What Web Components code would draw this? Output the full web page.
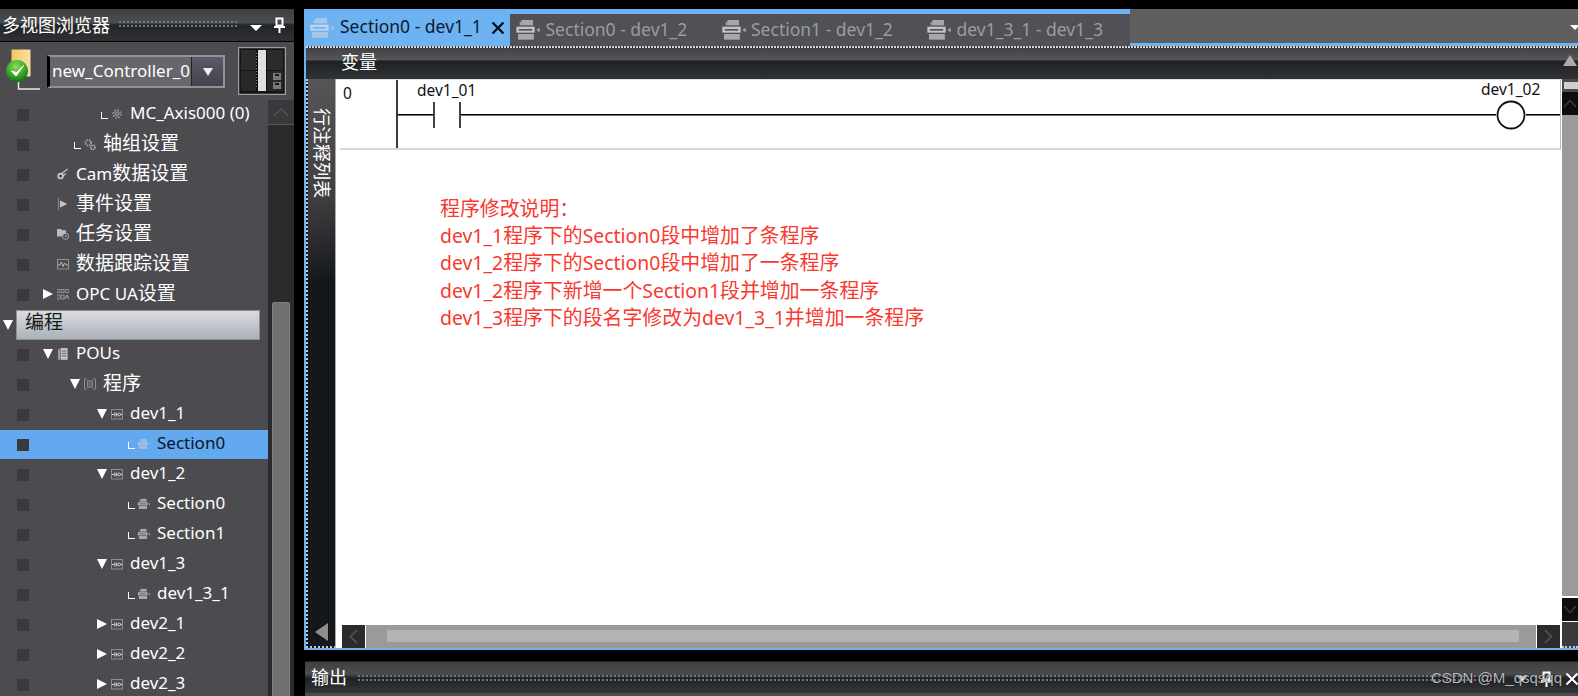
<!DOCTYPE html>
<html lang="zh">
<head>
<meta charset="utf-8">
<title>多视图浏览器</title>
<style>
html,body{margin:0;height:696px;overflow:hidden;background:#000;font-family:"Noto Sans","Noto Sans CJK SC",sans-serif;}
</style>
</head>
<body>
<app-shell>
  <view-browser slot="left"></view-browser>
  <ladder-editor slot="main"></ladder-editor>
  <output-bar slot="bottom"></output-bar>
</app-shell>
<script>
const mix = s => s.replace(/[\u4e00-\u9fff\uff1a]+/g, m => `<span class="c">${m}</span>`);
const CJK = `.c{font-size:1.118em;font-family:"Noto Sans CJK SC","Noto Sans",sans-serif;}`;
const section = (a,b,c)=>`<svg viewBox="0 0 14 12" width="100%" height="100%"><rect x="3" y="0" width="7" height="3.2" fill="${a}"/><rect x="2" y="1.2" width="1" height="2" fill="${a}"/><rect x="0" y="4" width="11" height="3.6" fill="${b}"/><rect x="1.5" y="5.4" width="8" height="1" fill="${c}"/><rect x="1" y="8.4" width="9.5" height="3.4" fill="${a}"/><path d="M14 4.6 12 6l2 1.4z" fill="${a}"/></svg>`;
const ICONS = {
  section: section('#a9a9ac','#bdbdc0','#4c4b50'),
  sectionSel: section('#a6bdd6','#b9cde2','#63a9ef'),
  tabActive: section('#a9c6e4','#bcd4ec','#6db3f1'),
  tab: section('#a8a8aa','#c4c4c6','#505156'),
  prog:`<svg viewBox="0 0 12 11" width="12" height="11"><rect x=".5" y=".5" width="11" height="9.5" fill="none" stroke="#8e8e90"/><path d="M1 5.5h2.6M3.800 3.500v4M5.400 3.500v4M5.400 5.500h1.400M9.600 5.500H11" stroke="#d0d0d0" fill="none"/><circle cx="8.200" cy="5.500" r="1.400" fill="none" stroke="#d0d0d0"/></svg>`,
  gear:`<svg viewBox="0 0 12 12" width="12" height="12"><circle cx="6" cy="6" r="3.600" fill="none" stroke="#8f8f90" stroke-width="2.400" stroke-dasharray="1.600 1.200"/><circle cx="6" cy="6" r="1.600" fill="#5c5c60" stroke="#a8a8a8" stroke-width=".8"/></svg>`,
  gears:`<svg viewBox="0 0 13 13" width="13" height="13"><circle cx="4.600" cy="4.600" r="3" fill="none" stroke="#a0a0a0" stroke-width="2.200" stroke-dasharray="1.400 1"/><circle cx="9.600" cy="9.600" r="2.300" fill="none" stroke="#c0c0c0" stroke-width="1.800" stroke-dasharray="1.200 .9"/></svg>`,
  cam:`<svg viewBox="0 0 12 12" width="12" height="12"><circle cx="3.600" cy="8" r="2.400" fill="none" stroke="#c8c8c8" stroke-width="1.700"/><path d="M4.600 5.600 10.800 1M5.800 8 9 5.600" stroke="#c8c8c8" stroke-width="1.200" fill="none"/></svg>`,
  flag:`<svg viewBox="0 0 12 12" width="12" height="12"><path d="M1.500 0v12" stroke="#8f8f90" fill="none"/><path d="M3 2.400 10.400 6 3 9.600z" fill="#c4c4c4"/></svg>`,
  task:`<svg viewBox="0 0 12 12" width="12" height="12"><path d="M0 1h4l1 1.200h4v6.400H0z" fill="#bcbcbc"/><circle cx="8.600" cy="8.400" r="3" fill="#4c4b50" stroke="#a8a8a8"/><path d="M8.600 6.800v1.700h1.400" stroke="#c0c0c0" fill="none" stroke-width=".7"/></svg>`,
  trace:`<svg viewBox="0 0 12 11" width="12" height="11"><rect x=".5" y=".5" width="11" height="9.500" fill="none" stroke="#909092"/><path d="M1 6 3 6 4.400 3 6 7.600 7.600 4 9 6h2" stroke="#cfcfcf" fill="none" stroke-width=".8"/></svg>`,
  opc:`<svg viewBox="0 0 12 11" width="12" height="11"><path d="M0 .5h3v3H0zM4 .5h3v3H4zM8 .5h3.500v3H8zM0 6h3v4H0zM4 6h3v4H4z" fill="none" stroke="#a0a0a2" stroke-width=".8"/><path d="M8 10l2-4 2 4" stroke="#b4b4b6" fill="none"/></svg>`,
  pou:`<svg viewBox="0 0 10 12" width="10" height="12"><rect x="0" y="1.200" width="2" height="10.400" fill="#9d9d9f"/><rect x="2.600" y="0" width="7" height="11.800" fill="#c2c2c4"/><path d="M3.800 3h4.600M3.800 5.400h4.600M3.800 7.800h4.600" stroke="#6c6c70"/></svg>`,
  prg:`<svg viewBox="0 0 13 12" width="13" height="12"><path d="M3 .5H.5v11H3M10 .5h2.500v11H10" stroke="#98989a" fill="none"/><rect x="3.400" y="2" width="6.200" height="8" fill="#8e8e90"/><path d="M4.400 4h4.200M4.400 6h4.200M4.400 8h4.200" stroke="#3e3e42"/></svg>`
};

class Comp extends HTMLElement {
  constructor(){ super(); this.attachShadow({mode:'open'}); }
  connectedCallback(){ this.shadowRoot.innerHTML = this.render(); }
}

class AppShell extends Comp {
  render(){ return `<style>
    :host{display:grid;grid-template-columns:294px 1fr;column-gap:10px;padding-top:9px;height:687px;overflow:hidden;box-sizing:content-box;}
    .l{grid-row:1;min-height:0;overflow:hidden;display:flex;}
    .r{display:flex;flex-direction:column;row-gap:11px;min-height:0;}
  </style><div class="l"><slot name="left"></slot></div>
  <div class="r"><slot name="main"></slot><slot name="bottom"></slot></div>`; }
}

class GripDots extends Comp {
  render(){ return `<style>
    :host{display:block;flex:1;height:8px;background-image:radial-gradient(circle at 1px 1px,#77777a 0.9px,transparent 1.100px);background-size:4px 4px;}
  </style>`; }
}
class PinIcon extends Comp {
  render(){ return `<style>:host{display:inline-flex}</style><svg viewBox="0 0 11 16" width="11" height="16"><path d="M2.500 1.500h6v7h-6z" fill="none" stroke="#fff" stroke-width="2"/><path d="M0 9h11v2H0z" fill="#fff"/><path d="M4.500 11h2v5h-2z" fill="#fff"/></svg>`; }
}

class ViewBrowser extends Comp {
  render(){
    const rows = [
      [2,'leaf','gear','MC_Axis000 (0)'],
      [1,'leaf','gears','轴组设置'],
      [0,'','cam','Cam数据设置'],
      [0,'','flag','事件设置'],
      [0,'','task','任务设置'],
      [0,'','trace','数据跟踪设置'],
      [0,'closed','opc','OPC UA设置'],
      'group',
      [0,'open','pou','POUs'],
      [1,'open','prg','程序'],
      [2,'open','prog','dev1_1'],
      [3,'leaf','sectionSel','Section0','sel'],
      [2,'open','prog','dev1_2'],
      [3,'leaf','section','Section0'],
      [3,'leaf','section','Section1'],
      [2,'open','prog','dev1_3'],
      [3,'leaf','section','dev1_3_1'],
      [2,'closed','prog','dev2_1'],
      [2,'closed','prog','dev2_2'],
      [2,'closed','prog','dev2_3'],
    ].map(r => r==='group' ? `<tree-group label="编程"></tree-group>`
      : `<tree-row level="${r[0]}" marker="${r[1]}" icon="${r[2]}" label="${r[3]}" ${r[4]?'selected':''}></tree-row>`).join('');
    return `<style>
      :host{display:flex;flex-direction:column;width:294px;height:687px;background:#4c4b50;overflow:hidden;}
      .head{height:32px;flex:none;display:flex;align-items:center;background:linear-gradient(#3d3f41 0,#4c4d50 42%,#222527 50%,#2f3133 100%);border-bottom:1px solid #000;color:#fff;font-size:18px;line-height:30px;padding-left:2px;font-family:"Noto Sans CJK SC",sans-serif;}
      .head span:first-child{margin-bottom:2px;}
      .head grip-dots{margin:0 13px 0 9px;}
      .tri{width:0;height:0;border-left:6px solid transparent;border-right:6px solid transparent;border-top:6px solid #fff;margin:6px 12px 0 0;}
      pin-icon{margin-right:9px;}
      .top{height:58px;flex:none;display:flex;position:relative;}
      controller-badge{margin:7px 0 0 6px;}
      combo-box{margin:13px 13px 0 6px;}
      module-thumb{margin-top:5px;}
      .tree{flex:1;display:flex;min-height:0;}
      .rows{width:268px;flex:none;}
    </style>
    <div class="head"><span>多视图浏览器</span><grip-dots></grip-dots><span class="tri"></span><pin-icon></pin-icon></div>
    <div class="top"><controller-badge></controller-badge><combo-box label="new_Controller_0"></combo-box><module-thumb></module-thumb></div>
    <div class="tree"><div class="rows">${rows}</div><tree-scroll></tree-scroll></div>`;
  }
}

class ControllerBadge extends Comp {
  render(){ return `<style>:host{display:block;width:35px;height:43px;flex:none}</style>
  <svg viewBox="0 0 35 43" width="35" height="43">
    <defs><radialGradient id="g" cx=".45" cy=".3" r=".7"><stop offset="0" stop-color="#8fdc5a"/><stop offset=".6" stop-color="#3aa82a"/><stop offset="1" stop-color="#176e18"/></radialGradient>
    <linearGradient id="y" x1="0" x2="1"><stop offset="0" stop-color="#f3c75f"/><stop offset="1" stop-color="#f7e2a2"/></linearGradient></defs>
    <path d="M5.500 .5H24.500V27.500H5.500z" fill="url(#y)"/>
    <circle cx="11" cy="22" r="11" fill="url(#g)"/>
    <path d="M5.500 22l4.500 5 7.500-10.500-7 7z" fill="#fff" stroke="#fff" stroke-width="1"/>
    <path d="M12.500 33v7h21.500" fill="none" stroke="#e6e6e6" stroke-width="1.500"/>
  </svg>`; }
}
class ComboBox extends Comp {
  render(){ return `<style>
    :host{display:flex;width:178px;height:33px;flex:none;box-sizing:border-box;border:2px solid #929294;border-left:3px solid #000;background:#67676b;color:#fff;font-size:17px;line-height:27px;overflow:hidden;}
    .t{flex:1;padding-left:2px;white-space:nowrap;min-width:0;}
    .b{width:31px;flex:none;background:linear-gradient(#5a5a68,#43434f);border-left:1px solid #222;display:flex;align-items:center;justify-content:center;}
    .b i{width:0;height:0;border-left:5.500px solid transparent;border-right:5.500px solid transparent;border-top:8px solid #eee;}
  </style><span class="t">${this.getAttribute('label')}</span><span class="b"><i></i></span>`; }
}
class ModuleThumb extends Comp {
  render(){ return `<style>:host{display:block;width:48px;height:48px;flex:none}</style>
  <svg viewBox="0 0 48 48" width="48" height="48">
    <rect x=".5" y=".5" width="47" height="47" fill="#141414" stroke="#9c9c9c" stroke-width="1.500"/>
    <rect x="3" y="3" width="15" height="20" fill="#2b2b2b"/><rect x="3" y="24" width="15" height="20" fill="#282828"/>
    <rect x="18" y="3" width="2" height="41" fill="#111"/>
    <rect x="20" y="3" width="8" height="41" fill="#e0e0e0"/><path d="M18.500 6v36" stroke="#8a7a6a" stroke-width="1" stroke-dasharray="1 2"/>
    <rect x="29" y="3" width="16" height="20" fill="#2b2b2b"/><rect x="29" y="24" width="16" height="20" fill="#282828"/>
    <rect x="35" y="26" width="8" height="7" fill="#777"/><rect x="35" y="35" width="8" height="7" fill="#777"/>
    <path d="M37 28h4M37 37h4" stroke="#1a1a1a" stroke-width="2"/>
  </svg>`; }
}

class TreeRow extends Comp {
  render(){
    const lv = +this.getAttribute('level'), m = this.getAttribute('marker'), ic = this.getAttribute('icon');
    const mark = m==='open' ? '<i class="d"></i>' : m==='closed' ? '<i class="r"></i>' : m==='leaf' ? '<i class="l"></i>' : '';
    const sel = this.hasAttribute('selected');
    return `<style>
      ${CJK}
      :host{display:flex;align-items:center;height:30px;box-sizing:border-box;padding-left:17px;color:${sel?'#0b1526':'#fff'};font-size:17px;line-height:26px;white-space:nowrap;position:relative;}
      .bg{position:absolute;left:0;right:0;top:0;height:29px;background:${sel?'#63a9ef':'transparent'};}
      .cb{width:12px;height:12px;background:#3a393f;flex:none;position:relative;}
      .m{width:14px;height:14px;flex:none;margin:0 0 2px ${14+27*lv}px;position:relative;display:flex;align-items:center;}
      .m i{display:block;position:relative;}
      .d{width:0;height:0;border-left:5px solid transparent;border-right:5px solid transparent;border-top:10px solid #fff;}
      .r{width:0;height:0;border-top:5px solid transparent;border-bottom:5px solid transparent;border-left:10px solid #fff;}
      .l{margin-left:4px;width:6px;height:6px;border-left:1.500px solid #fff;border-bottom:1.500px solid #fff;margin-top:2px;}
      .ic{width:12px;height:12px;flex:none;display:flex;align-items:center;justify-content:center;margin:0 7px 2px 0;position:relative;}
      .tx{position:relative;margin-bottom:4px;}
    </style><span class="bg"></span><span class="cb"></span><span class="m">${mark}</span><span class="ic">${ICONS[ic]}</span><span class="tx">${mix(this.getAttribute('label'))}</span>`;
  }
}
class TreeGroup extends Comp {
  render(){ return `<style>
    ${CJK}
    :host{display:flex;align-items:center;height:30px;position:relative;padding-left:3px;font-size:17px;}
    .d{width:0;height:0;border-left:5px solid transparent;border-right:5px solid transparent;border-top:10px solid #fff;flex:none;}
    .bar{margin-left:3px;width:244px;height:30px;box-sizing:border-box;border:1px solid #8e8e8e;background:linear-gradient(#dcdcde,#a8b2ba);color:#16181c;padding-left:8px;line-height:20px;}
  </style><span class="d"></span><span class="bar">${mix(this.getAttribute('label'))}</span>`; }
}
class TreeScroll extends Comp {
  render(){ return `<style>
    :host{display:flex;flex-direction:column;width:26px;flex:none;background:#2b2b2d;overflow:hidden;}
    .up{height:24px;flex:none;background:#39393b;border-bottom:1px solid #55555a;display:flex;align-items:center;justify-content:center;}
    .th{width:18px;margin:177px 4px 0 4px;height:400px;flex:none;background:#707071;border:1px solid #808082;box-sizing:border-box;border-radius:2px 2px 0 0;}
  </style><div class="up"><svg viewBox="0 0 14 8" width="14" height="8"><path d="M0 7.500 7 1l7 6.500" fill="none" stroke="#525256" stroke-width="1.500"/></svg></div><div class="th"></div>`; }
}

class TabStrip extends Comp {
  render(){ 
    const tabs = ['Section0 - dev1_2','Section1 - dev1_2','dev1_3_1 - dev1_3'].map(t=>`<editor-tab label="${t}"></editor-tab>`).join('');
    return `<style>
      :host{display:flex;height:37px;flex:none;background:#5f5f60;position:relative;}
      .rest{display:flex;width:620px;flex:none;background:#505156;border-top:5px solid #6db3f1;box-sizing:border-box;}
      .fill{flex:1;border-bottom:3px solid #6db3f1;display:flex;justify-content:flex-end;align-items:center;}
      .fill i{width:0;height:0;border-left:5px solid transparent;border-right:5px solid transparent;border-top:5px solid #fff;margin:2px -2px 0 0;}
    </style><editor-tab label="Section0 - dev1_1" active></editor-tab><div class="rest">${tabs}</div><div class="fill"><i></i></div>`; }
}
class EditorTab extends Comp {
  render(){ const a = this.hasAttribute('active');
    return `<style>
      :host{display:flex;align-items:center;width:${a?'206px':'205.500px'};flex:none;box-sizing:border-box;height:${a?37:32}px;background:${a?'#6db3f1':'transparent'};color:${a?'#0b1a2e':'#9c9c9e'};font-size:17.500px;white-space:nowrap;}
      .i{width:24px;height:20px;flex:none;margin:${a?'1px 6px 0 6px':'0 5.500px 0 6px'};filter:blur(.4px);}
      .t{flex:1;margin-bottom:${a?'3px':'2px'};}
      .x{width:14px;height:14px;margin-right:5px;flex:none}
    </style><span class="i">${a?ICONS.tabActive:ICONS.tab}</span><span class="t">${this.getAttribute('label')}</span>${a?'<svg class="x" viewBox="0 0 14 14"><path d="M1.500 1.500l11 11M12.500 1.500l-11 11" stroke="#0a0f18" stroke-width="2.400"/></svg>':''}`; }
}

class LadderEditor extends Comp {
  render(){ return `<style>
    :host{display:flex;flex-direction:column;height:641px;flex:none;}
    .inner{flex:1;display:flex;flex-direction:column;min-height:0;border-left:2px solid #6db3f1;border-bottom:2px solid #6db3f1;}
    .dots{height:2px;flex:none;background:repeating-linear-gradient(90deg,#d8d8d8 0 2px,#222 2px 3px);}
    .head{height:31px;flex:none;display:flex;align-items:center;padding-left:35px;color:#fff;font:18px/31px "Noto Sans CJK SC",sans-serif;background:linear-gradient(#434345 0,#545558 38%,#1f2224 42%,#303234 100%);}
    .head span{flex:1;margin-bottom:4px;}
    .head i{width:0;height:0;border-left:7px solid transparent;border-right:7px solid transparent;border-bottom:11px solid #ababab;margin:0 1px 6px 0;}
    .body{flex:1;display:grid;grid-template-columns:30px 1fr 16px;min-height:0;}
    .main{display:flex;flex-direction:column;background:#fff;min-width:0;}
  </style>
  <tab-strip></tab-strip>
  <div class="inner">
    <div class="dots"></div>
    <div class="head"><span>变量</span><i></i></div>
    <div class="body">
      <side-rail></side-rail>
      <div class="main"><ladder-doc></ladder-doc><h-scroll></h-scroll></div>
      <v-scroll></v-scroll>
    </div>
  </div>`; }
}
class SideRail extends Comp {
  render(){ return `<style>
    :host{display:flex;flex-direction:column;justify-content:space-between;align-items:center;box-sizing:border-box;border-left:2px dotted #c8c8c8;border-bottom:2px dotted #c8c8c8;background:#15181b;border-right:1px solid #aaa;}
    .lab{width:100%;height:200px;box-sizing:border-box;padding:29px 0 0 2px;display:flex;justify-content:center;background:linear-gradient(170deg,#565658,#3e3e40 60%,#15181b);}
    .v{writing-mode:vertical-rl;text-orientation:sideways;color:#fff;font:18px/18px "Noto Sans CJK SC",sans-serif;height:90px;}
    .tri{width:0;height:0;border-top:9px solid transparent;border-bottom:9px solid transparent;border-right:13px solid #8e8e8e;margin-bottom:5px;}
  </style><div class="lab"><span class="v">行注释列表</span></div><div class="tri"></div>`; }
}
class LadderDoc extends Comp {
  render(){ return `<style>
    :host{display:block;flex:1;min-height:0;background:#fff;border-top:1px solid #ddd;}
    .notes{margin:44px 0 0 104px;color:#f8392f;font-size:19.400px;line-height:27.200px;white-space:nowrap;}
    .notes div{height:27.200px;}
    .notes span{font-family:"Noto Sans CJK SC",sans-serif;font-size:19.900px;}
  </style>
  <ladder-rung></ladder-rung>
  <div class="notes">
    <div>${mix('程序修改说明：')}</div>
    <div>${mix('dev1_1程序下的Section0段中增加了条程序')}</div>
    <div>${mix('dev1_2程序下的Section0段中增加了一条程序')}</div>
    <div>${mix('dev1_2程序下新增一个Section1段并增加一条程序')}</div>
    <div>${mix('dev1_3程序下的段名字修改为dev1_3_1并增加一条程序')}</div>
  </div>`; }
}
class LadderRung extends Comp {
  render(){ return `<style>
    :host{display:flex;height:70px;box-sizing:border-box;margin:0 1px 0 4px;border-bottom:2px solid #d8d8d8;border-right:1px solid #bbb;color:#111;font-size:15.500px;line-height:20px;}
    .no{width:53px;padding-left:3px;flex:none;padding-top:3px;}
    .rail{width:2px;background:#3a3a3a;flex:none;}
    .net{flex:1;display:flex;align-items:center;height:28px;margin-top:21px;}
    .w{height:1px;background:#000;border-bottom:1px solid #777;}
    .f{flex:1}
    .part{position:relative;flex:none;display:flex;}
    .lab{position:absolute;top:-21px;white-space:nowrap;}
  </style>
  <div class="no">0</div><div class="rail"></div>
  <div class="net">
    <div class="w" style="width:35px"></div>
    <div class="part"><span class="lab" style="left:-16px">dev1_01</span>
      <svg width="28" height="28" viewBox="0 0 28 28"><path d="M1 1v26M27 1v26" stroke="#222" stroke-width="1.700"/></svg></div>
    <div class="w f"></div>
    <div class="part"><span class="lab" style="left:-15px;top:-21px">dev1_02</span>
      <svg width="30" height="30" viewBox="0 0 30 30"><circle cx="15" cy="15" r="13.500" fill="#fff" stroke="#111" stroke-width="1.800"/></svg></div>
    <div class="w" style="width:34px"></div>
  </div>`; }
}
class HScroll extends Comp {
  render(){ return `<style>
    :host{display:flex;height:23px;flex:none;margin:0 2px 0 6px;column-gap:1px;}
    .b{width:23px;flex:none;background:#2b2b2d;display:flex;align-items:center;justify-content:center;}
    .tr{flex:1;background:#9a9a9a;padding:5px 17px 6px 21px;box-sizing:border-box;display:flex;}
    .tr i{flex:1;background:#b4b4b4;}
  </style><div class="b"><svg width="9" height="15" viewBox="0 0 9 15"><path d="M8 1 1.500 7.500 8 14" fill="none" stroke="#4e4e52" stroke-width="1.800"/></svg></div>
  <div class="tr"><i></i></div>
  <div class="b"><svg width="9" height="15" viewBox="0 0 9 15"><path d="M1 1l6.500 6.500L1 14" fill="none" stroke="#4e4e52" stroke-width="1.800"/></svg></div>`; }
}
class VScroll extends Comp {
  render(){ return `<style>
    :host{display:flex;flex-direction:column;background:#fff;}
    .g{height:13px;flex:none;background:#4a4a4c;display:flex;align-items:center;padding-left:2px;}
    .g i{flex:1;height:7px;background:#cfcfcf;}
    .b{height:23px;flex:none;background:#0e0e0f;display:flex;align-items:center;justify-content:center;}
    .tr{flex:1;background:#9a9a9a;margin-bottom:2px;}
    .c{height:26px;flex:none;background:#3a3a3c;border-bottom:2px dotted #c8c8c8;box-sizing:border-box;margin-top:1px;}
  </style><div class="g"><i></i></div>
  <div class="b"><svg width="14" height="9" viewBox="0 0 14 9"><path d="M1 8l6-6.500L13 8" fill="none" stroke="#3c3c3e" stroke-width="1.500"/></svg></div>
  <div class="tr"></div>
  <div class="b"><svg width="14" height="9" viewBox="0 0 14 9"><path d="M1 1l6 6.500L13 1" fill="none" stroke="#3c3c3e" stroke-width="1.500"/></svg></div>
  <div class="c"></div>`; }
}
class OutputBar extends Comp {
  render(){ return `<style>
    :host{display:flex;align-items:center;height:35px;flex:none;margin-left:1px;position:relative;padding-left:6px;box-sizing:border-box;color:#fff;font:18px/30px "Noto Sans CJK SC",sans-serif;background:linear-gradient(#3f4143 0,#4b4c4f 35%,#1f2224 48%,#333538 90%,#4c4b50 92%);border-top:1px solid #222;}
    .lb{margin-bottom:6px;}
    grip-dots{margin:0 21px 0 11px;}
    .tri{width:0;height:0;border-left:5px solid transparent;border-right:5px solid transparent;border-top:6px solid #fff;margin-right:14px;}
    pin-icon{margin-right:14px;}
    .x{margin-right:0;flex:none}
    .wm{position:absolute;right:16px;top:7px;font:15px/18px "Liberation Sans",sans-serif;color:rgba(255,255,255,.72);text-shadow:0 0 1px #000;white-space:nowrap;}
  </style><span class="lb">输出</span><grip-dots></grip-dots><span class="tri"></span><pin-icon></pin-icon>
  <svg class="x" width="12" height="12" viewBox="0 0 12 12"><path d="M.5.500l11 11M11.500.500l-11 11" stroke="#fff" stroke-width="2"/></svg>
  <span class="wm">CSDN @M_qsqsqq</span>`; }
}

const defs = {'app-shell':AppShell,'grip-dots':GripDots,'pin-icon':PinIcon,'view-browser':ViewBrowser,'controller-badge':ControllerBadge,'combo-box':ComboBox,'module-thumb':ModuleThumb,'tree-row':TreeRow,'tree-group':TreeGroup,'tree-scroll':TreeScroll,'tab-strip':TabStrip,'editor-tab':EditorTab,'ladder-editor':LadderEditor,'side-rail':SideRail,'ladder-doc':LadderDoc,'ladder-rung':LadderRung,'h-scroll':HScroll,'v-scroll':VScroll,'output-bar':OutputBar};
for (const k in defs) customElements.define(k, defs[k]);
</script>
</body>
</html>
